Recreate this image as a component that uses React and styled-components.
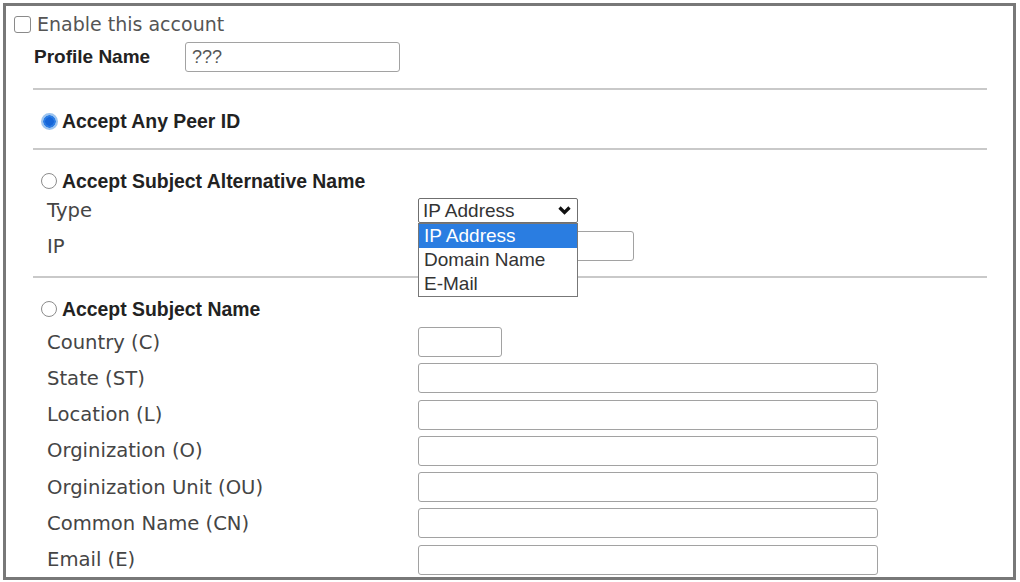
import React from "react";
import styled, { createGlobalStyle } from "styled-components";

const GlobalStyle = createGlobalStyle`
    html, body {
        margin: 0;
        padding: 0;
        background: #fff;
    }
`;

const Frame = styled.div`
    box-sizing: border-box;
    margin: 3px;
    width: 1013px;
    height: 577px;
    border: 3px solid #787878;
    overflow: hidden;
    background: #fff;
`;

const EnableRow = styled.label`
    display: flex;
    align-items: center;
    height: 22px;
    margin-top: 7px;
    padding-left: 8px;
    font-family: "DejaVu Sans", Verdana, sans-serif;
    font-size: 19px;
    color: #555;
`;

const CheckBox = styled.input.attrs({ type: "checkbox" })`
    appearance: none;
    box-sizing: border-box;
    width: 17px;
    height: 17px;
    margin: 0 6px 0 0;
    border: 1.5px solid #8a8a8a;
    border-radius: 3px;
    background: #fff;
`;

const ProfileRow = styled.div`
    display: flex;
    align-items: center;
    height: 30px;
    margin-top: 7px;
    padding-left: 28px;
`;

const BoldLabel = styled.span`
    font-family: "Liberation Sans", Arial, sans-serif;
    font-weight: 700;
    font-size: ${props => props.size || 19.4}px;
    color: #222;
    width: ${props => props.width ? props.width + 'px' : 'auto'};
`;

const TextBox = styled.input`
    box-sizing: border-box;
    width: ${props => props.width}px;
    height: 30px;
    margin: 0;
    padding: 0 6px;
    border: 1.5px solid #a2a2a2;
    border-radius: 3px;
    font-family: "Liberation Sans", Arial, sans-serif;
    font-size: 18px;
    color: #555;
    background: #fff;
`;

const Divider = styled.div`
    height: 2px;
    margin: ${props => props.top}px 26px 0 27px;
    background: #c9c9c9;
`;

const Section = styled.div`
    padding-left: 35px;
`;

const RadioRow = styled.label`
    display: flex;
    align-items: center;
    height: 22px;
    margin-top: 20px;
`;

const Radio = styled.input.attrs({ type: "radio" })`
    appearance: none;
    box-sizing: border-box;
    width: 16px;
    height: 16px;
    margin: 0 5px 0 0;
    border-radius: 50%;
    border: 1.5px solid #8c8c8c;
    background: #fff;

    &:checked {
        width: 17px;
        height: 17px;
        margin-right: 4px;
        border: 2px solid #9cc4ef;
        background: radial-gradient(circle, #1565d8 0 4px, #2a7be4 4.5px 6px, #9cc4ef 6.5px);
    }
`;

const FieldRow = styled.div`
    display: flex;
    align-items: center;
    height: ${props => props.height || 30}px;
    margin-top: ${props => props.top}px;
    padding-left: 6px;
`;

const FieldLabel = styled.span`
    width: 371px;
    font-family: "DejaVu Sans", Verdana, sans-serif;
    font-size: 19.6px;
    color: #454545;
`;

const SelectWrap = styled.div`
    position: relative;
    width: 160px;
    height: 25px;
`;

const SelectBox = styled.div`
    box-sizing: border-box;
    display: flex;
    align-items: center;
    justify-content: space-between;
    height: 25px;
    padding: 0 6px 0 4px;
    border: 1px solid #6f6f6f;
    border-radius: 2px;
    background: #fff;
    font-family: "Liberation Sans", Arial, sans-serif;
    font-size: 19px;
    color: #333;
`;

const OptionList = styled.ul`
    position: absolute;
    top: 25px;
    left: 0;
    z-index: 2;
    box-sizing: border-box;
    width: 160px;
    margin: 0;
    padding: 0;
    list-style: none;
    border: 1px solid #777;
    background: #fff;
`;

const Option = styled.li`
    height: 24px;
    line-height: 23px;
    padding-left: 5px;
    font-family: "Liberation Sans", Arial, sans-serif;
    font-size: 19px;
    color: ${props => props.active ? '#fff' : '#333'};
    background: ${props => props.active ? '#2a7de1' : 'transparent'};
`;

const Chevron = () => (
    <svg width="13" height="9" viewBox="0 0 13 9">
        <path d="M1.5 1.5 L6.5 6.5 L11.5 1.5" fill="none" stroke="#111" strokeWidth="3.2" strokeLinejoin="miter"/>
    </svg>
);

const subjectFields = [
    {label: 'Country (C)', width: 84},
    {label: 'State (ST)', width: 460},
    {label: 'Location (L)', width: 460},
    {label: 'Orginization (O)', width: 460},
    {label: 'Orginization Unit (OU)', width: 460},
    {label: 'Common Name (CN)', width: 460},
    {label: 'Email (E)', width: 460},
];

const typeOptions = ['IP Address', 'Domain Name', 'E-Mail'];

export default function App() {
    return (
        <>
            <GlobalStyle/>
            <Frame>
                <EnableRow>
                    <CheckBox/>
                    Enable this account
                </EnableRow>
                <ProfileRow>
                    <BoldLabel width={151} size={19}>Profile Name</BoldLabel>
                    <TextBox width={215} defaultValue="???"/>
                </ProfileRow>

                <Divider top={16}/>
                <Section>
                    <RadioRow>
                        <Radio name="peer" defaultChecked/>
                        <BoldLabel>Accept Any Peer ID</BoldLabel>
                    </RadioRow>
                </Section>

                <Divider top={16}/>
                <Section>
                    <RadioRow>
                        <Radio name="peer"/>
                        <BoldLabel>Accept Subject Alternative Name</BoldLabel>
                    </RadioRow>
                    <FieldRow top={6} height={25}>
                        <FieldLabel>Type</FieldLabel>
                        <SelectWrap>
                            <SelectBox>
                                <span>IP Address</span>
                                <Chevron/>
                            </SelectBox>
                            <OptionList>
                                {typeOptions.map((opt, i) =>
                                    <Option key={opt} active={i === 0}>{opt}</Option>
                                )}
                            </OptionList>
                        </SelectWrap>
                    </FieldRow>
                    <FieldRow top={8}>
                        <FieldLabel>IP</FieldLabel>
                        <TextBox width={216}/>
                    </FieldRow>
                </Section>

                <Divider top={15}/>
                <Section>
                    <RadioRow>
                        <Radio name="peer"/>
                        <BoldLabel>Accept Subject Name</BoldLabel>
                    </RadioRow>
                    {subjectFields.map((field, i) =>
                        <FieldRow key={field.label} top={i === 0 ? 7 : 6.3}>
                            <FieldLabel>{field.label}</FieldLabel>
                            <TextBox width={field.width}/>
                        </FieldRow>
                    )}
                </Section>
            </Frame>
        </>
    );
}
